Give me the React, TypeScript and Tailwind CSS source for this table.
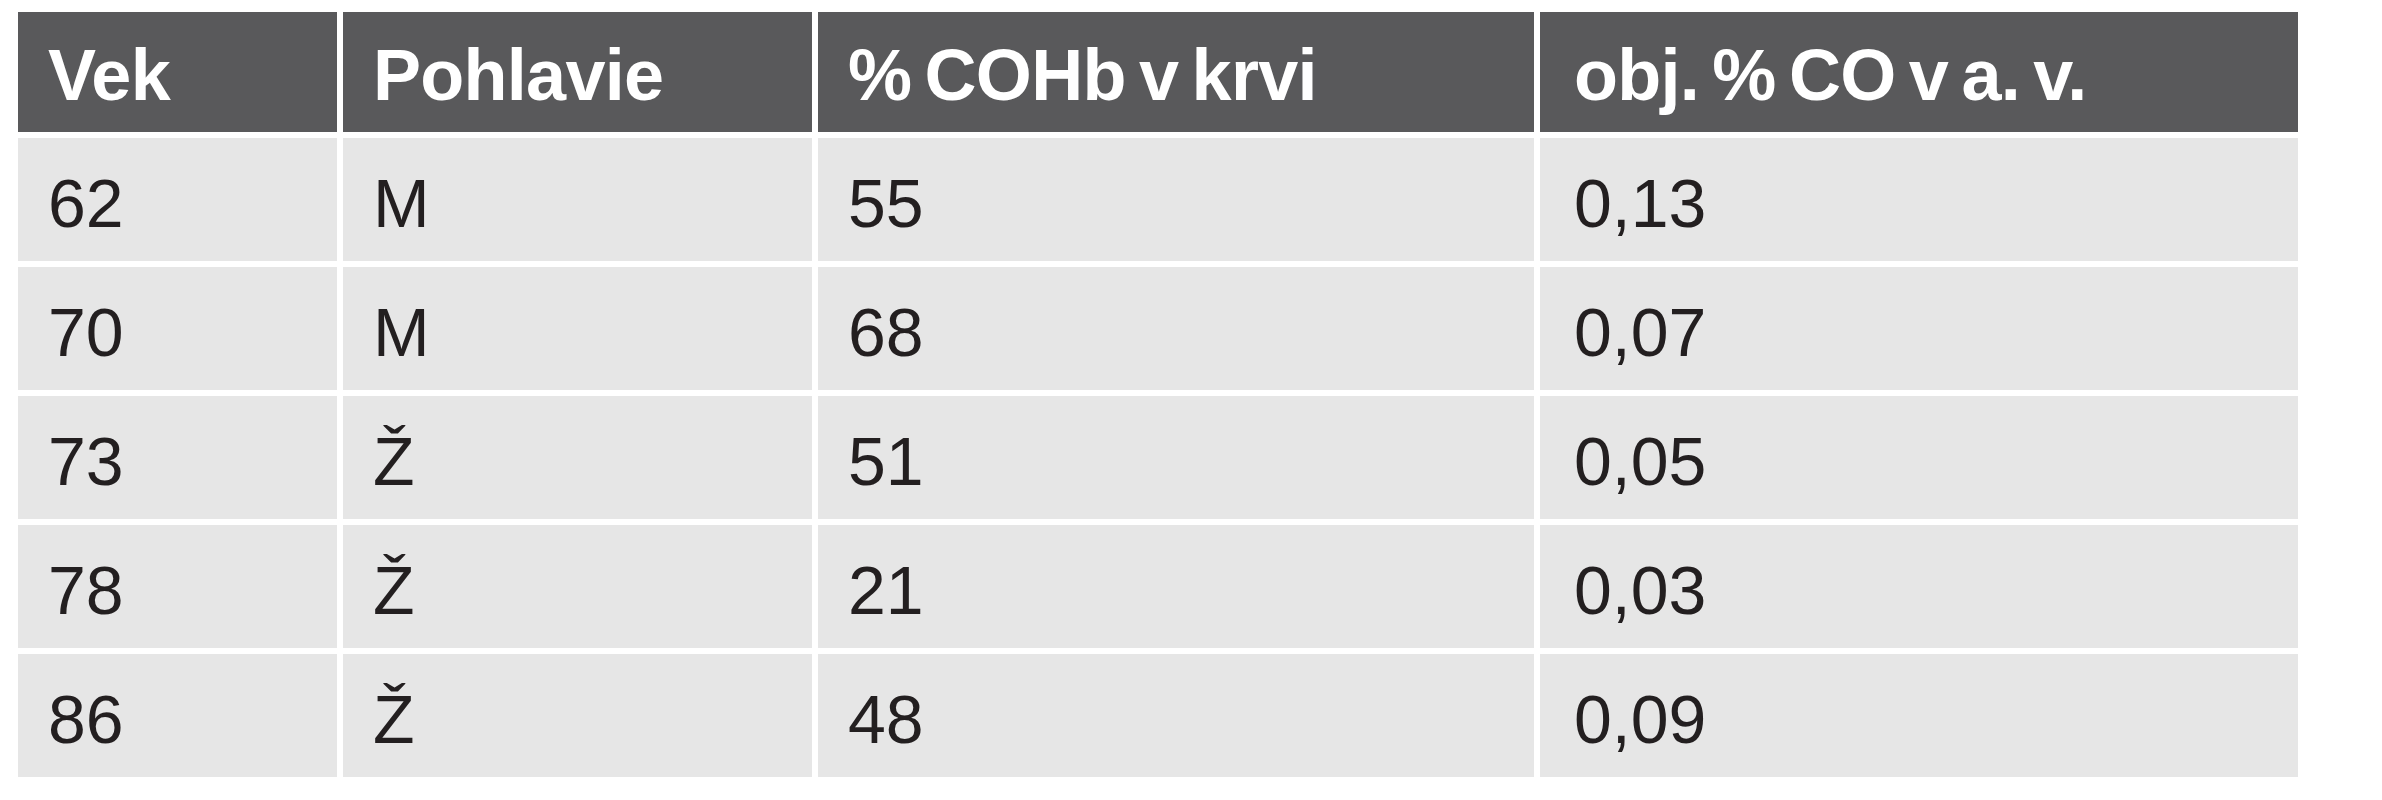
const headers = ["Vek", "Pohlavie", "% COHb v krvi", "obj. % CO v a. v."];

const rows = [
  ["62", "M", "55", "0,13"],
  ["70", "M", "68", "0,07"],
  ["73", "Ž", "51", "0,05"],
  ["78", "Ž", "21", "0,03"],
  ["86", "Ž", "48", "0,09"],
];

const pad = ["pl-[30px]", "pl-[30px]", "pl-[30px]", "pl-[34px]"];

export default function App() {
  return (
    <div className="w-[2382px] h-[800px] bg-white pt-[12px] pl-[18px] font-['Liberation_Sans',Arial,sans-serif]">
      <div className="grid grid-cols-[319px_469px_716px_758px] grid-rows-[120px_repeat(5,123px)] gap-[6px]">
        {headers.map((h, i) => (
          <div
            key={h}
            className={`flex items-center pt-[6px] bg-[#59595b] text-white font-bold text-[72px] leading-none tracking-[-0.01em] [word-spacing:-6px] ${pad[i]}`}
          >
            {h}
          </div>
        ))}
        {rows.map((r, ri) =>
          r.map((c, ci) => (
            <div
              key={`${ri}-${ci}`}
              className={`flex items-center pt-[6px] bg-[#e6e6e6] text-[#231f20] text-[68px] leading-none ${pad[ci]}`}
            >
              {c}
            </div>
          ))
        )}
      </div>
    </div>
  );
}
